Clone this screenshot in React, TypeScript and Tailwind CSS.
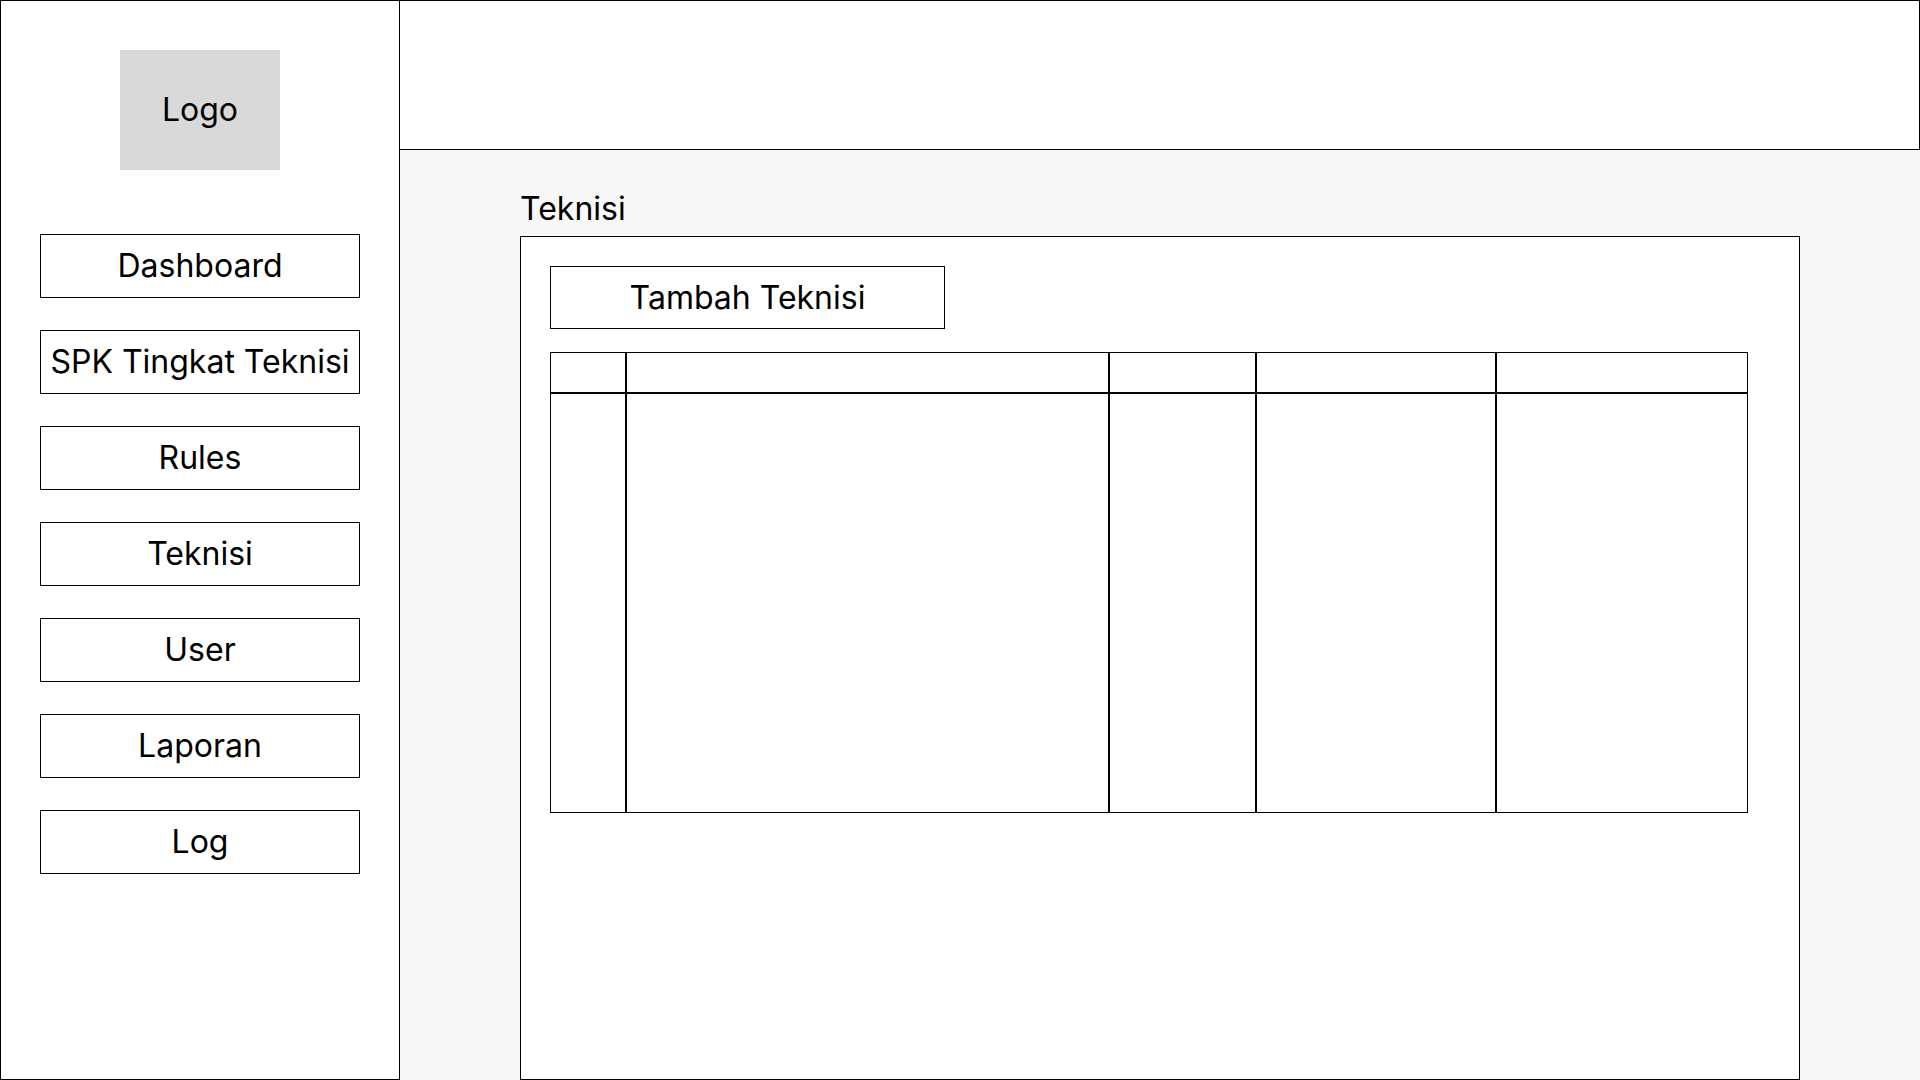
import React from 'react';

const navItems = ['Dashboard', 'SPK Tingkat Teknisi', 'Rules', 'Teknisi', 'User', 'Laporan', 'Log'];

// widths of the table columns, left to right
const columns = ['w-[75px]', 'w-[483px]', 'w-[147px]', 'w-[240px]', 'w-[252px]'];

const App: React.FC = () => {
    return (
        <div className="flex h-screen w-full overflow-hidden font-['Inter',sans-serif] text-black">
            {/* Sidebar */}
            <aside className="w-[400px] shrink-0 border border-black bg-white flex flex-col items-center">
                <div className="mt-[49px] w-[160px] h-[120px] bg-[#d9d9d9] flex items-center justify-center text-[32px]">
                    Logo
                </div>
                <nav className="mt-[64px] w-[320px] flex flex-col gap-[32px]">
                    {navItems.map(item => (
                        <button
                            key={item}
                            className="h-[64px] border border-black bg-white flex items-center justify-center text-[32px] whitespace-nowrap"
                        >
                            {item}
                        </button>
                    ))}
                </nav>
            </aside>

            <div className="flex-1 flex flex-col">
                {/* Header */}
                <header className="h-[150px] shrink-0 border border-l-0 border-black bg-white" />

                {/* Content */}
                <main className="flex-1 flex flex-col bg-[#f8f8f8] pl-[120px] pr-[120px] pt-[39px]">
                    <h2 className="text-[32px] leading-[39px]">Teknisi</h2>
                    <div className="mt-[8px] flex-1 border border-black bg-white px-[29px] pt-[29px]">
                        <button className="w-[395px] h-[63px] border border-black bg-white flex items-center justify-center text-[32px]">
                            Tambah Teknisi
                        </button>
                        <table className="mt-[23px] w-[1197px] h-[461px] table-fixed border-collapse border border-black">
                            <thead>
                                <tr className="h-[40px] border-b-2 border-black">
                                    {columns.map((w, i) => (
                                        <th key={i} className={`${w} border-l-2 border-black first:border-l-0`} />
                                    ))}
                                </tr>
                            </thead>
                            <tbody>
                                <tr>
                                    {columns.map((w, i) => (
                                        <td key={i} className="border-l-2 border-black first:border-l-0" />
                                    ))}
                                </tr>
                            </tbody>
                        </table>
                    </div>
                </main>
            </div>
        </div>
    );
};

export default App;
